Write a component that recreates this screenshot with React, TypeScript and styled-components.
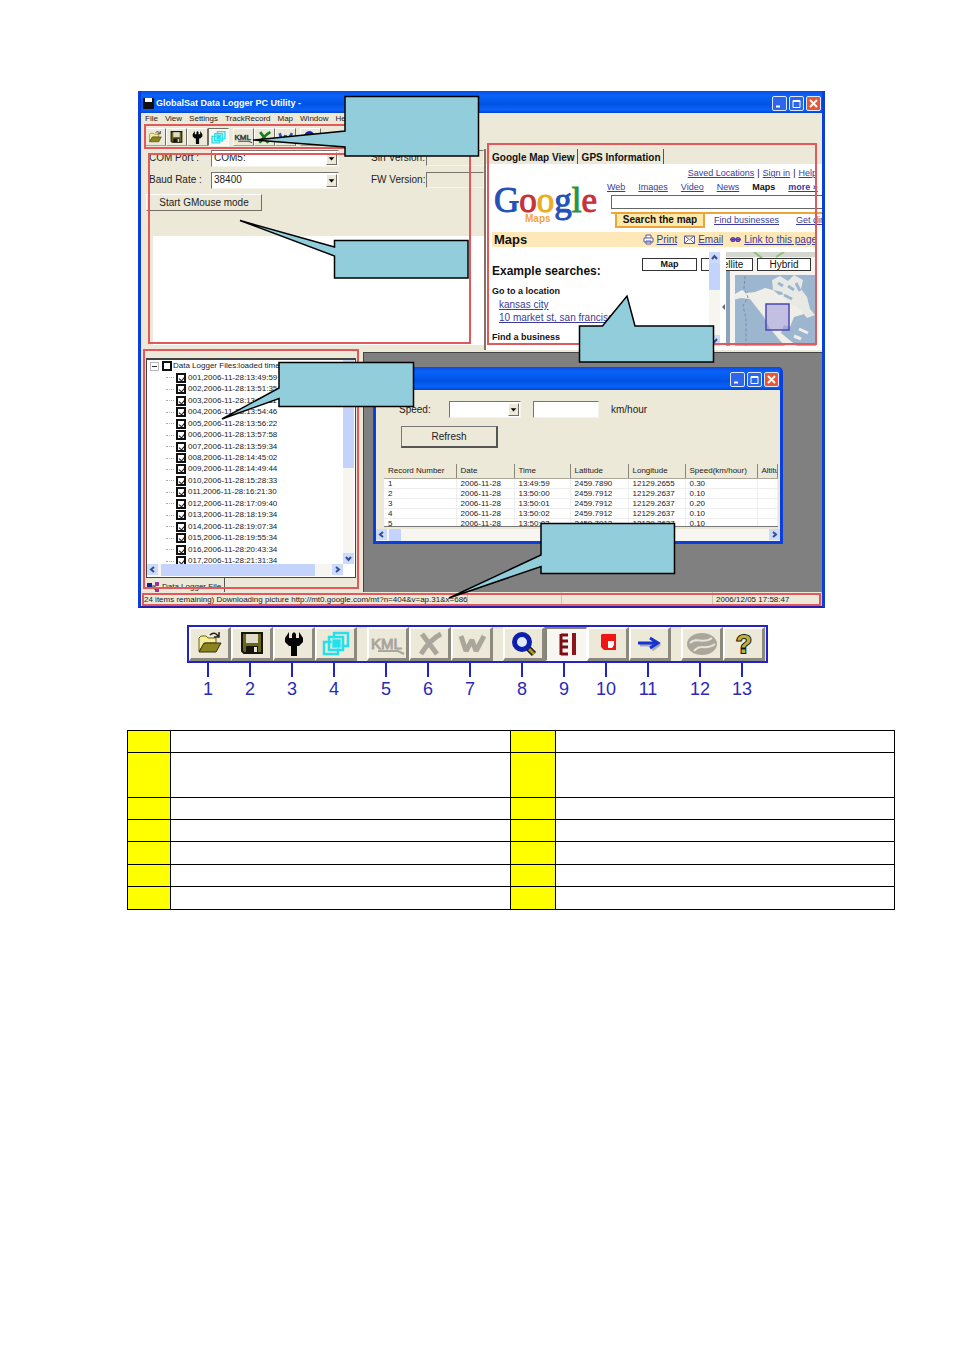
import React from "react";
import styled, { createGlobalStyle, css } from "styled-components";

const GlobalStyle = createGlobalStyle`
  * { box-sizing: border-box; }
  body { margin: 0; background: #fff; font-family: "Liberation Sans", Arial, sans-serif; color: #222; }
  button, input, select { font: inherit; color: inherit; border-radius: 0; margin: 0; padding: 0; }
`;

const beige = "#ece9d8";
const bevel = css`
  border: 1px solid;
  border-color: #fff #716f64 #716f64 #fff;
`;
const sunken = css`
  border: 1px solid;
  border-color: #77756b #f5f3ea #f5f3ea #77756b;
`;

const Page = styled.main`
  padding: 91px 59px 60px 127px;
`;

/* ---------- application window ---------- */
const AppWindow = styled.section`
  position: relative;
  margin: 0 70px 0 11px;
  border: solid #0a3fdc;
  border-width: 0 3px 2px;
  border-bottom-color: #2a1cb0;
  background: ${beige};
  font-size: 8px;
  line-height: 10px;
`;

const TitleBar = styled.header`
  display: flex;
  align-items: center;
  gap: 2px;
  height: 22px;
  padding: 2px 1px 0 2px;
  background: linear-gradient(#0a4be0, #0a62fa 20%, #0054e3 60%, #0a62fa 85%, #0046d0);
  color: #fff;
  h1 {
    margin: 0 auto 0 0;
    font-size: 9px;
    line-height: 12px;
    white-space: nowrap;
  }
`;

const CaptionButton = styled.button<{ $close?: boolean }>`
  display: flex;
  width: 15px;
  height: 15px;
  border: 1px solid #dfe8fa;
  border-radius: 2px;
  background: ${(p) => (p.$close ? "#e2593a" : "#2d66e8")};
  svg { width: 13px; height: 13px; }
`;

function Captions() {
  return (
    <>
      <CaptionButton aria-label="Minimize">
        <svg viewBox="0 0 13 13"><path d="M3 9.500h4" stroke="#fff" strokeWidth="2" /></svg>
      </CaptionButton>
      <CaptionButton aria-label="Maximize">
        <svg viewBox="0 0 13 13"><path d="M3 3.500h7v7H3zM3 4.500h7" stroke="#fff" fill="none" /></svg>
      </CaptionButton>
      <CaptionButton $close aria-label="Close">
        <svg viewBox="0 0 13 13"><path d="M3 3l7 7M10 3l-7 7" stroke="#fff" strokeWidth="2" /></svg>
      </CaptionButton>
    </>
  );
}

const MenuBar = styled.nav`
  display: flex;
  gap: 7px;
  height: 12px;
  padding: 1px 4px;
  button { border: 0; background: none; }
`;

const ToolStrip = styled.div`
  display: flex;
  align-items: center;
  height: 24px;
  padding-left: 4px;
`;

const SmallTool = styled.button<{ $pressed?: boolean; $gap?: boolean }>`
  display: grid;
  place-items: center;
  width: 21px;
  height: 18px;
  margin-left: ${(p) => (p.$gap ? 4 : 0)}px;
  border: 1px solid;
  border-color: ${(p) => (p.$pressed ? "#716f64 #fff #fff #716f64" : "#fff #716f64 #a5a396 #fff")};
  background: ${(p) => (p.$pressed ? "#f8f7f2" : beige)};
  svg { width: 15px; height: 15px; overflow: visible; }
`;

const TopPane = styled.div`
  display: grid;
  grid-template-columns: 343px minmax(0, 1fr);
  height: 201px;
`;

const FormPane = styled.form`
  display: flex;
  flex-direction: column;
  padding: 1px 0 5px 5px;
  font-size: 10px;
  line-height: 12px;
`;

const FormRow = styled.div`
  display: flex;
  align-items: center;
  height: 16px;
  margin-bottom: 6px;
`;

const FieldLabel = styled.label<{ $w: number; $offset?: number }>`
  width: ${(p) => p.$w}px;
  margin-left: ${(p) => p.$offset ?? 3}px;
  white-space: nowrap;
`;

const SelectBox = styled.span<{ $w: number }>`
  position: relative;
  width: ${(p) => p.$w}px;
  height: 17px;
  select {
    width: 100%;
    height: 100%;
    appearance: none;
    padding-left: 2px;
    background: #fff;
    ${sunken}
  }
  svg {
    position: absolute;
    top: 2px;
    right: 2px;
    width: 11px;
    height: 13px;
    background: ${beige};
    pointer-events: none;
    ${bevel}
  }
`;

function Drop({ id, w, value }: { id: string; w: number; value: string }) {
  return (
    <SelectBox $w={w}>
      <select id={id} defaultValue={value}>
        <option value={value}>{value}</option>
      </select>
      <svg viewBox="0 0 11 13"><path d="M2 5h7l-3.500 4z" fill="#000" /></svg>
    </SelectBox>
  );
}

const ReadOnly = styled.input`
  flex: 1;
  min-width: 0;
  height: 16px;
  background: ${beige};
  ${sunken}
`;

const PushButton = styled.button<{ $w: number; $h: number }>`
  width: ${(p) => p.$w}px;
  height: ${(p) => p.$h}px;
  background: ${beige};
  ${bevel}
`;

const OutputArea = styled.div`
  flex: 1;
  margin: 25px 0 0 7px;
  background: #fff;
`;

/* ---------- map side ---------- */
const MapPane = styled.div`
  display: flex;
  flex-direction: column;
  min-width: 0;
  overflow: hidden;
  border-left: 2px solid #8b6f62;
  font-size: 10px;
  line-height: 12px;
`;

const TabRow = styled.div`
  display: flex;
  height: 16px;
  padding-left: 2px;
  button {
    padding: 2px 2px 0 4px;
    border: 0;
    border-right: 1px solid #555;
    background: none;
    font-weight: bold;
    white-space: nowrap;
    color: #111;
  }
`;

const WebPage = styled.div`
  flex: 1;
  padding-bottom: 4px;
  background: #fff;
  color: #111;
  a { color: #3b3b9c; white-space: nowrap; }
`;

const WebHeader = styled.div`
  display: grid;
  grid-template-columns: 121px minmax(0, 1fr);
  height: 68px;
  font-size: 9px;
`;

const Logo = styled.div`
  padding: 15px 0 0 8px;
  font: 35px/44px "Liberation Serif", "Times New Roman", serif;
  white-space: nowrap;
  small {
    display: block;
    margin: -10px 0 0 31px;
    font: bold 10px/12px "Liberation Sans", Arial, sans-serif;
    color: #f2a43a;
  }
`;
const Letter = styled.span<{ $c: string }>`
  color: ${(p) => p.$c};
  -webkit-text-stroke: 1px ${(p) => p.$c};
`;

const TopLinks = styled.div`
  display: flex;
  justify-content: flex-end;
  gap: 3px;
  height: 16px;
  padding: 3px 5px 0 0;
`;
const NavLinks = styled.div`
  display: flex;
  gap: 13px;
  height: 15px;
  padding-top: 1px;
`;
const SearchBox = styled.input`
  display: block;
  width: calc(100% - 4px);
  height: 14px;
  margin: 0 0 3px 4px;
  background: #fff;
  border: 1px solid #666;
  border-right: 0;
`;
const SearchTabs = styled.div`
  display: flex;
  gap: 9px;
  margin-left: 4px;
  padding-left: 4px;
  border-top: 2px solid #eba53a;
  overflow: hidden;
  b {
    flex: none;
    width: 90px;
    height: 14px;
    text-align: center;
    font-size: 10px;
    line-height: 11px;
    border: solid #eba53a;
    border-width: 0 2px 2px;
    background: #ffe9a8;
  }
  a { flex: none; margin-right: 8px; }
`;

const PageBar = styled.div`
  display: flex;
  align-items: center;
  gap: 3px;
  height: 15px;
  margin: 0 5px 0 6px;
  padding-left: 2px;
  background: #ffe8b8;
  h2 { margin: 0 auto 0 0; font-size: 13px; line-height: 15px; }
  svg { width: 11px; height: 11px; margin-left: 4px; }
`;

const WebBody = styled.div`
  display: grid;
  grid-template-columns: minmax(0, 1fr) 11px 6px 90px;
  height: 94px;
  margin: 5px 6px 0 6px;
`;

const Examples = styled.div`
  position: relative;
  padding-top: 12px;
  white-space: nowrap;
  overflow: hidden;
  h3 { margin: 0 0 7px; font-size: 12px; line-height: 14px; }
  h4 { margin: 0; font-size: 9px; line-height: 13px; }
  a { display: block; margin-left: 7px; line-height: 13px; }
  a + h4 { margin-top: 7px; }
`;

const MapTypes = styled.div<{ $left: number }>`
  position: absolute;
  top: 6px;
  left: ${(p) => p.$left}px;
  display: flex;
  gap: 4px;
`;
const MapType = styled.button<{ $w: number; $on?: boolean }>`
  width: ${(p) => p.$w}px;
  height: 13px;
  border: 1px solid #333;
  background: #fff;
  font-weight: ${(p) => (p.$on ? "bold" : "normal")};
  font-size: ${(p) => (p.$on ? 9 : 10)}px;
  line-height: 11px;
`;

const MapArea = styled.div`
  position: relative;
  overflow: hidden;
  svg { display: block; width: 90px; height: 94px; }
`;

/* ---------- scroll bars ---------- */
const ScrollTrack = styled.div<{ $vertical?: boolean }>`
  display: flex;
  flex-direction: ${(p) => (p.$vertical ? "column" : "row")};
  justify-content: space-between;
  background: #f6f5f0;
  ${(p) => (p.$vertical ? "width: 11px;" : "height: 12px;")}
`;
const ScrollArrow = styled.button`
  display: grid;
  place-items: center;
  width: 11px;
  height: 11px;
  border: 0;
  background: #cddafb;
  svg { width: 9px; height: 9px; }
`;
const Thumb = styled.div<{ $w?: number; $h?: number; $start?: number }>`
  width: ${(p) => p.$w ?? 11}px;
  height: ${(p) => p.$h ?? 12}px;
  margin-left: ${(p) => p.$start ?? 0}px;
  margin-bottom: auto;
  margin-right: auto;
  border-radius: 1px;
  background: #c3d3fb;
`;
const arrows = {
  up: "M2 6l2.500-3 2.500 3",
  down: "M2 3l2.500 3 2.500-3",
  left: "M6 2L3 4.500 6 7",
  right: "M3 2l3 2.500L3 7",
};
function Arrow({ dir }: { dir: keyof typeof arrows }) {
  return (
    <ScrollArrow type="button" aria-label={"Scroll " + dir}>
      <svg viewBox="0 0 9 9"><path d={arrows[dir]} fill="none" stroke="#33508c" strokeWidth="2" /></svg>
    </ScrollArrow>
  );
}

/* ---------- lower half ---------- */
const BottomPane = styled.div`
  display: grid;
  grid-template-columns: 222px minmax(0, 1fr);
  height: 242px;
`;
const TreePane = styled.div`
  padding: 8px 7px 0 5px;
`;
const TreeBox = styled.div`
  display: grid;
  grid-template-columns: minmax(0, 1fr) 12px;
  grid-template-rows: 204px 13px;
  height: 220px;
  border: 1px solid #444;
  border-top: 2px solid #444;
  background: #fff;
`;
const TreeView = styled.div`
  overflow: hidden;
`;
const TreeRoot = styled.label`
  display: flex;
  align-items: center;
  gap: 1px;
  height: 12px;
  padding-left: 3px;
  white-space: nowrap;
`;
const Expander = styled.svg`
  width: 9px;
  height: 9px;
  margin-right: 2px;
  border: 1px solid #bbb;
`;
const Tick = styled.input`
  appearance: none;
  flex: none;
  width: 10px;
  height: 10px;
  border: 2px solid #111;
  background: #fff;
  position: relative;
  &:checked::after {
    content: "";
    position: absolute;
    left: 2px;
    top: 0;
    width: 3px;
    height: 5px;
    border: solid #111;
    border-width: 0 1px 1px 0;
    transform: rotate(40deg);
  }
`;
const TreeItems = styled.div`
  display: flex;
  flex-direction: column;
  height: 195px;
  margin-left: 16px;
  label {
    flex: 1;
    display: flex;
    align-items: center;
    gap: 2px;
    padding-left: 3px;
    white-space: nowrap;
  }
  label::before {
    content: "";
    width: 8px;
    border-top: 1px dotted #aaa;
  }
`;
const FileTab = styled.button`
  display: flex;
  align-items: center;
  gap: 3px;
  width: 79px;
  height: 14px;
  padding: 4px 0 0 1px;
  border: 0;
  border-right: 1px solid #555;
  background: none;
  white-space: nowrap;
  svg { width: 12px; height: 10px; }
`;

const Desktop = styled.div`
  position: relative;
  margin-top: 2px;
  border: solid #444;
  border-width: 1px 0 0 1px;
  background: #808080;
`;
const ChildWindow = styled.section`
  position: absolute;
  left: 9px;
  top: 14px;
  right: 39px;
  border: solid #0a3fdc;
  border-width: 0 3px 3px;
  border-radius: 5px 5px 0 0;
  background: ${beige};
  ${TitleBar} { height: 23px; }
`;
const Filter = styled.div`
  display: flex;
  align-items: center;
  gap: 12px;
  padding: 11px 0 0 23px;
  font-size: 10px;
  line-height: 12px;
  input {
    width: 66px;
    height: 17px;
    background: #fff;
    ${sunken}
  }
  ${FieldLabel} { margin: 0; }
`;
const Refresh = styled.div`
  padding: 8px 0 16px 25px;
  font-size: 10px;
  button { border-color: #777 #555 #555 #777; border-width: 1px 2px 2px 1px; }
`;
const GridClip = styled.div`
  height: 63px;
  margin: 0 2px 2px 8px;
  overflow: hidden;
  background: #fff;
  border-bottom: 1px solid #777;
`;
const Records = styled.table`
  width: 100%;
  table-layout: fixed;
  border-collapse: collapse;
  th, td {
    height: 10px;
    padding: 0 0 0 4px;
    font-weight: normal;
    line-height: 9px;
    text-align: left;
    white-space: nowrap;
    overflow: hidden;
    border-bottom: 1px solid #eee;
    border-right: 1px solid #eee;
  }
  th {
    height: 14px;
    line-height: 12px;
    background: ${beige};
    border-bottom: 1px solid #aaa69a;
    border-right: 1px solid #8a877c;
  }
`;

const StatusBar = styled.footer`
  display: grid;
  grid-template-columns: 327px 94px minmax(0, 1fr) 109px;
  height: 14px;
  line-height: 12px;
  span {
    padding: 2px 0 0 3px;
    border-right: 1px solid #c9c5b4;
    white-space: nowrap;
  }
`;

const Notes = styled.svg`
  position: absolute;
  top: 0;
  left: -3px;
  width: 687px;
  height: 517px;
  pointer-events: none;
`;

/* ---------- icons ---------- */
type IconName =
  | "open" | "save" | "wrench" | "layers" | "kml" | "excel" | "word"
  | "find" | "scale" | "stop" | "go" | "earth" | "help";

function Icon({ name, active }: { name: IconName; active?: boolean }) {
  const off = "#a9a69b";
  const art: Record<IconName, React.ReactNode> = {
    open: (
      <>
        <path d="M3 21V8l2-2h5l2 2h8v5H9z" fill="#f4ee9a" stroke="#6b6410" />
        <path d="M8 13h17l-5 9H3z" fill="#8b8420" stroke="#37330a" />
        <path d="M14 5c3-3 6-2 8 1m1-4v5h-5" fill="none" stroke="#222" strokeWidth="1.500" />
      </>
    ),
    save: (
      <>
        <path d="M4 3h20v20H6l-2-2z" fill="#6b6718" stroke="#16150a" strokeWidth="2" />
        <path d="M8 4h12v9H8z" fill="#dedbcb" />
        <path d="M8 16h12v7H8z" fill="#15150d" />
        <path d="M16 17h3v5h-3z" fill="#e7e4d6" />
      </>
    ),
    wrench: <path d="M9 2v6h3V4l2-2 2 2v4h3V2l4 6v4l-4 4h-2v10h-6V16H9l-4-4V8z" fill="#050505" />,
    layers: (
      <g stroke="#25dfea" fill="none" strokeWidth="2.500">
        <path d="M12 3h14v13H12zM7 7h14v13H7zM2 12h14v12H2z" />
        <path d="M10 9h9v9h-9z" fill="#25dfea" stroke="#8ff3f8" strokeWidth="1" />
      </g>
    ),
    kml: (
      <>
        <text x="-3" y="19" fontSize="15" fill={active ? "#444" : off} stroke={active ? "#444" : off}>KML</text>
        <path d="M4 21h20l6 3" stroke={active ? "#444" : off} strokeWidth="2" fill="none" />
      </>
    ),
    excel: <path d="M6 4l15 20M25 4c-8 4-15 12-20 20" stroke={active ? "#16801c" : off} strokeWidth="5" fill="none" />,
    word: <path d="M3 6l5 15 6-11 4 11L26 6" stroke={active ? "#2a50c8" : off} strokeWidth="5" strokeLinejoin="bevel" fill="none" />,
    find: (
      <>
        <path d="M17 17l7 7" stroke="#1c1c10" strokeWidth="6" />
        <path d="M19 19l5 5" stroke="#a39a28" strokeWidth="3" />
        <circle cx="12" cy="12" r="7.500" fill="#dfe9fa" stroke="#0c1fae" strokeWidth="5" />
      </>
    ),
    scale: (
      <>
        <path d="M8 3v21M8 4h7M8 10h7M8 16h7M8 23h7" stroke="#7d0d12" strokeWidth="3" fill="none" />
        <path d="M21 2v22" stroke="#8d1418" strokeWidth="4" />
      </>
    ),
    stop: (
      <>
        <path d="M8 4h14v16H10l-3-3V5z" fill="#f01414" />
        <path d="M14 11h6v4l-2 3h-4z" fill="#fff" />
      </>
    ),
    go: (
      <>
        <path d="M4 15h17m-5 5l8-6" stroke="#a9a9b8" strokeWidth="3" fill="none" />
        <path d="M2 13h20M14 8l8 5-8 5" stroke="#1733d0" strokeWidth="3" fill="none" />
      </>
    ),
    earth: (
      <>
        <ellipse cx="14" cy="14" rx="15" ry="11" fill={off} />
        <path d="M2 13c7-7 13 2 22-5M6 21c6-8 12 0 21-7" stroke="#e8e5d8" strokeWidth="2" fill="none" />
      </>
    ),
    help: (
      <text x="6" y="23" fontSize="26" fontWeight="bold" fill="#b9b13c" stroke="#111" strokeWidth="2" paintOrder="stroke">?</text>
    ),
  };
  return <svg viewBox="0 0 28 28" aria-hidden="true">{art[name]}</svg>;
}

/* ---------- numbered toolbar ---------- */
const KeyBar = styled.div`
  display: flex;
  gap: 10px;
  width: 581px;
  height: 38px;
  margin: 17px 0 0 60px;
  border: 2px solid #2222c8;
  background: ${beige};
`;
const KeyGroup = styled.div`
  display: flex;
`;
const KeyButton = styled.button<{ $pressed?: boolean }>`
  display: grid;
  place-items: center;
  width: 42px;
  height: 34px;
  border: solid;
  border-width: ${(p) => (p.$pressed ? "2px 1px 1px 2px" : "2px 3px 3px 2px")};
  border-color: ${(p) => (p.$pressed ? "#85827a #fff #fff #85827a" : "#fff #8c897e #8c897e #fff")};
  background: ${(p) => (p.$pressed ? "#f7f6f1" : beige)};
  svg { width: 28px; height: 28px; overflow: visible; }
`;
const KeyLegend = styled.div`
  display: flex;
  gap: 10px;
  margin-left: 60px;
  color: #2a2ab8;
  font-size: 18px;
  line-height: 24px;
`;
const KeyNumber = styled.span`
  width: 42px;
  text-align: center;
  &::before {
    content: "";
    display: block;
    width: 2px;
    height: 14px;
    margin: 0 auto;
    background: #2222c8;
  }
`;

const keyGroups: { first: number; icons: IconName[] }[] = [
  { first: 1, icons: ["open", "save", "wrench", "layers"] },
  { first: 5, icons: ["kml", "excel", "word"] },
  { first: 8, icons: ["find", "scale", "stop", "go"] },
  { first: 12, icons: ["earth", "help"] },
];

/* ---------- description table ---------- */
const KeyTable = styled.table`
  width: 100%;
  margin-top: 29px;
  table-layout: fixed;
  border-collapse: collapse;
  td { padding: 0; border: 1px solid #000; }
  td:nth-child(odd) { background: #ff0; }
`;
const KeyRow = styled.tr<{ $h: number }>`
  height: ${(p) => p.$h}px;
`;

const files = [
  "13:49:59", "13:51:35", "13:53:11", "13:54:46", "13:56:22", "13:57:58", "13:59:34",
  "14:45:02", "14:49:44", "15:28:33", "16:21:30", "17:09:40", "18:19:34", "19:07:34",
  "19:55:34", "20:43:34", "21:31:34",
];
const records = [
  ["1", "2006-11-28", "13:49:59", "2459.7890", "12129.2655", "0.30"],
  ["2", "2006-11-28", "13:50:00", "2459.7912", "12129.2637", "0.10"],
  ["3", "2006-11-28", "13:50:01", "2459.7912", "12129.2637", "0.20"],
  ["4", "2006-11-28", "13:50:02", "2459.7912", "12129.2637", "0.10"],
  ["5", "2006-11-28", "13:50:03", "2459.7912", "12129.2637", "0.10"],
];
const logoLetters: [string, string][] = [
  ["G", "#2450b8"], ["o", "#c8303a"], ["o", "#e8b020"], ["g", "#2450b8"], ["l", "#2a9440"], ["e", "#c8303a"],
];

export default function App() {
  return (
    <Page>
      <GlobalStyle />
      <AppWindow>
        <TitleBar>
          <svg width="11" height="11" viewBox="0 0 11 11"><path d="M0 0h11v11H0z" fill="#111" /><path d="M2 0h7v4H2z" fill="#fff" /></svg>
          <h1>GlobalSat Data Logger PC Utility -</h1>
          <Captions />
        </TitleBar>
        <MenuBar>
          {["File", "View", "Settings", "TrackRecord", "Map", "Window", "Help"].map((m) => (
            <button key={m}>{m}</button>
          ))}
        </MenuBar>
        <ToolStrip>
          <SmallTool aria-label="Open"><Icon name="open" /></SmallTool>
          <SmallTool aria-label="Save"><Icon name="save" /></SmallTool>
          <SmallTool aria-label="Settings"><Icon name="wrench" /></SmallTool>
          <SmallTool aria-label="Layers" $pressed><Icon name="layers" /></SmallTool>
          <SmallTool aria-label="KML" $gap><Icon name="kml" active /></SmallTool>
          <SmallTool aria-label="Excel"><Icon name="excel" active /></SmallTool>
          <SmallTool aria-label="Word"><Icon name="word" active /></SmallTool>
          <SmallTool aria-label="Find" $gap><Icon name="find" /></SmallTool>
        </ToolStrip>

        <TopPane>
          <FormPane>
            <FormRow>
              <FieldLabel htmlFor="com" $w={62}>COM Port :</FieldLabel>
              <Drop id="com" w={128} value="COM5:" />
              <FieldLabel htmlFor="sirf" $w={55} $offset={32}>Sirf Version:</FieldLabel>
              <ReadOnly id="sirf" readOnly />
            </FormRow>
            <FormRow>
              <FieldLabel htmlFor="baud" $w={62}>Baud Rate :</FieldLabel>
              <Drop id="baud" w={128} value="38400" />
              <FieldLabel htmlFor="fw" $w={55} $offset={32}>FW Version:</FieldLabel>
              <ReadOnly id="fw" readOnly />
            </FormRow>
            <PushButton type="button" $w={116} $h={17}>Start GMouse mode</PushButton>
            <OutputArea />
          </FormPane>

          <MapPane>
            <TabRow>
              <button>Google Map View</button>
              <button>GPS Information</button>
            </TabRow>
            <WebPage>
              <WebHeader>
                <Logo>
                  {logoLetters.map(([ch, c], i) => <Letter key={i} $c={c}>{ch}</Letter>)}
                  <small>Maps</small>
                </Logo>
                <div>
                  <TopLinks>
                    <a href="#saved">Saved Locations</a> | <a href="#signin">Sign in</a> | <a href="#help">Help</a>
                  </TopLinks>
                  <NavLinks>
                    <a href="#web">Web</a><a href="#images">Images</a><a href="#video">Video</a>
                    <a href="#news">News</a><b>Maps</b><a href="#more"><b>more »</b></a>
                  </NavLinks>
                  <SearchBox aria-label="Search the map" />
                  <SearchTabs>
                    <b>Search the map</b>
                    <a href="#business">Find businesses</a>
                    <a href="#directions">Get directions</a>
                  </SearchTabs>
                </div>
              </WebHeader>
              <PageBar>
                <h2>Maps</h2>
                <svg viewBox="0 0 11 11" fill="#fff" stroke="#5a5aa8"><path d="M3 4V1h5v3M1 4h9v4H1zM3 7h5v3H3z" /></svg>
                <a href="#print">Print</a>
                <svg viewBox="0 0 11 11" fill="#fff" stroke="#5a5aa8"><path d="M0.500 2h10v7.500h-10zM1 2l4.500 4L10 2M1 9l3-3M10 9L7 6" /></svg>
                <a href="#email">Email</a>
                <svg viewBox="0 0 11 11" fill="none" stroke="#5a3aa8" strokeWidth="1.500"><circle cx="3" cy="5.500" r="1.800" /><circle cx="8" cy="5.500" r="1.800" /><path d="M0 5.500h11" /></svg>
                <a href="#link">Link to this page</a>
              </PageBar>
              <WebBody>
                <Examples>
                  <h3>Example searches:</h3>
                  <h4>Go to a location</h4>
                  <a href="#kansas">kansas city</a>
                  <a href="#market">10 market st, san francisco</a>
                  <h4>Find a business</h4>
                  <MapTypes $left={150}>
                    <MapType $w={55} $on>Map</MapType>
                    <MapType $w={55} aria-label="Satellite" />
                  </MapTypes>
                </Examples>
                <ScrollTrack $vertical>
                  <Arrow dir="up" />
                  <Thumb $h={27} />
                  <Arrow dir="down" />
                </ScrollTrack>
                <svg width="6" height="94" viewBox="0 0 6 94"><path d="M5 52v6l-3-3z" fill="#668" /></svg>
                <MapArea>
                  <svg viewBox="0 0 90 94">
                    <path d="M0 0h90v94H0z" fill="#f4f3ef" />
                    <path d="M0 0h90v5H0z" fill="#d4d6d0" />
                    <path d="M28 0l8 6M50 5l8-5" stroke="#8fbf80" strokeWidth="2" />
                    <path d="M0 19h4v75H0z" fill="#8ba3b8" />
                    <path d="M9 23h81v71H9z" fill="#9db6cf" />
                    <path d="M9 42l7-4 5 3 8-1 10-4 8 2 6 5 8-1 8 3 12 12-3 5-10 3-4 10-6-2-3 8 6 5 10 8h-12l-8-9-8-10-5-10-7-9-7-9-9-1-8 2z" fill="#efeee8" />
                    <path d="M46 28l8-4 8 5 6-6 9 5-2 9 6 8 3 12 5 6-8 3-9-11-10-4-6-11-9-2z" fill="#e8e9e4" />
                    <path d="M52 31l5 3M62 34l6 4M58 43l8 4M70 31l4 8" stroke="#9db6cf" strokeWidth="3" />
                    <path d="M73 77l9 4M68 84l7 3" stroke="#efeee8" strokeWidth="3" />
                    <path d="M19 24l-1 13 4 8-5 9 3 12v28" stroke="#7d8ba5" strokeDasharray="3 2" fill="none" />
                    <path d="M40 52h23v26H40z" fill="#a3a0e0" fillOpacity="0.600" stroke="#4a48b0" strokeWidth="1.500" />
                  </svg>
                  <MapTypes $left={-28}>
                    <MapType $w={55}>Satellite</MapType>
                    <MapType $w={54}>Hybrid</MapType>
                  </MapTypes>
                </MapArea>
              </WebBody>
            </WebPage>
          </MapPane>
        </TopPane>

        <BottomPane>
          <TreePane>
            <TreeBox>
              <TreeView>
                <TreeRoot>
                  <Expander viewBox="0 0 7 7"><path d="M1 3.500h5" stroke="#333" /></Expander>
                  <Tick type="checkbox" />
                  <span>Data Logger Files:loaded time:1</span>
                </TreeRoot>
                <TreeItems>
                  {files.map((t, i) => (
                    <label key={t}>
                      <Tick type="checkbox" defaultChecked />
                      {String(i + 1).padStart(3, "0")},2006-11-28:{t}
                    </label>
                  ))}
                </TreeItems>
              </TreeView>
              <ScrollTrack $vertical>
                <Arrow dir="up" />
                <Thumb $h={97} />
                <Arrow dir="down" />
              </ScrollTrack>
              <ScrollTrack>
                <Arrow dir="left" />
                <Thumb $w={154} $start={3} />
                <Arrow dir="right" />
              </ScrollTrack>
            </TreeBox>
            <FileTab>
              <svg viewBox="0 0 12 10"><path d="M0 1h5v5H0z" fill="#1c1c9a" /><path d="M8 0h4v4H8zM8 6h4v4H8z" fill="#a0309a" /><path d="M5 4h3v4" stroke="#333" fill="none" /></svg>
              Data Logger File
            </FileTab>
          </TreePane>
          <Desktop>
            <ChildWindow>
              <TitleBar><h1 aria-label="Track record" /><Captions /></TitleBar>
              <Filter>
                <FieldLabel htmlFor="speed" $w={38}>Speed:</FieldLabel>
                <Drop id="speed" w={72} value="" />
                <input id="limit" aria-label="Speed limit" />
                <label htmlFor="limit">km/hour</label>
              </Filter>
              <Refresh><PushButton $w={97} $h={22}>Refresh</PushButton></Refresh>
              <GridClip>
                <Records>
                  <colgroup>
                    {[72, 58, 56, 58, 57, 72].map((w, i) => <col key={i} style={{ width: w }} />)}
                    <col />
                  </colgroup>
                  <thead>
                    <tr>
                      {["Record Number", "Date", "Time", "Latitude", "Longitude", "Speed(km/hour)", "Altitude"].map((h) => (
                        <th key={h}>{h}</th>
                      ))}
                    </tr>
                  </thead>
                  <tbody>
                    {records.map((r) => (
                      <tr key={r[0]}>{r.map((c, i) => <td key={i}>{c}</td>)}<td /></tr>
                    ))}
                  </tbody>
                </Records>
              </GridClip>
              <ScrollTrack>
                <Arrow dir="left" />
                <Thumb $w={12} $start={2} />
                <Arrow dir="right" />
              </ScrollTrack>
            </ChildWindow>
          </Desktop>
        </BottomPane>

        <StatusBar>
          <span>24 items remaining) Downloading picture http://mt0.google.com/mt?n=404&amp;v=ap.31&amp;x=686</span>
          <span />
          <span />
          <span>2006/12/05 17:58:47</span>
        </StatusBar>

        <Notes viewBox="138 91 687 517" aria-hidden="true">
          <g fill="none" stroke="#e2595c" strokeWidth="2">
            <path d="M145 125h255v23H145z" />
            <path d="M149 154h321v189H149z" />
            <path d="M488 144h328v200H488z" />
            <path d="M144 350h214v238H144z" />
            <path d="M143 594h677v11H143z" />
          </g>
          <g fill="#92cddc" stroke="#000" strokeWidth="1.500">
            <path d="M345 96.500h133.500v59.500H345v-9L253 140l92-9z" />
            <path d="M334.500 240.500h133.500v37.500H334.500v-22L240 220.500l94.500 26.500z" />
            <path d="M579.500 326h23l24.500-30 8 30h78.500v36h-134z" />
            <path d="M279 362.500h134.500v44H279v-8L222 419l57-31z" />
            <path d="M541 523.500h133.500v50H541v-7L449 598l92-43z" />
          </g>
        </Notes>
      </AppWindow>

      <KeyBar>
        {keyGroups.map((g) => (
          <KeyGroup key={g.first}>
            {g.icons.map((n) => (
              <KeyButton key={n} $pressed={n === "scale"} aria-label={n}><Icon name={n} /></KeyButton>
            ))}
          </KeyGroup>
        ))}
      </KeyBar>
      <KeyLegend>
        {keyGroups.map((g) => (
          <KeyGroup key={g.first}>
            {g.icons.map((n, i) => <KeyNumber key={n}>{g.first + i}</KeyNumber>)}
          </KeyGroup>
        ))}
      </KeyLegend>

      <KeyTable>
        <colgroup>
          <col style={{ width: 43 }} />
          <col />
          <col style={{ width: 45 }} />
          <col />
        </colgroup>
        <tbody>
          {[22, 45, 22, 22, 23, 22, 23].map((h, i) => (
            <KeyRow key={i} $h={h}><td /><td /><td /><td /></KeyRow>
          ))}
        </tbody>
      </KeyTable>
    </Page>
  );
}
